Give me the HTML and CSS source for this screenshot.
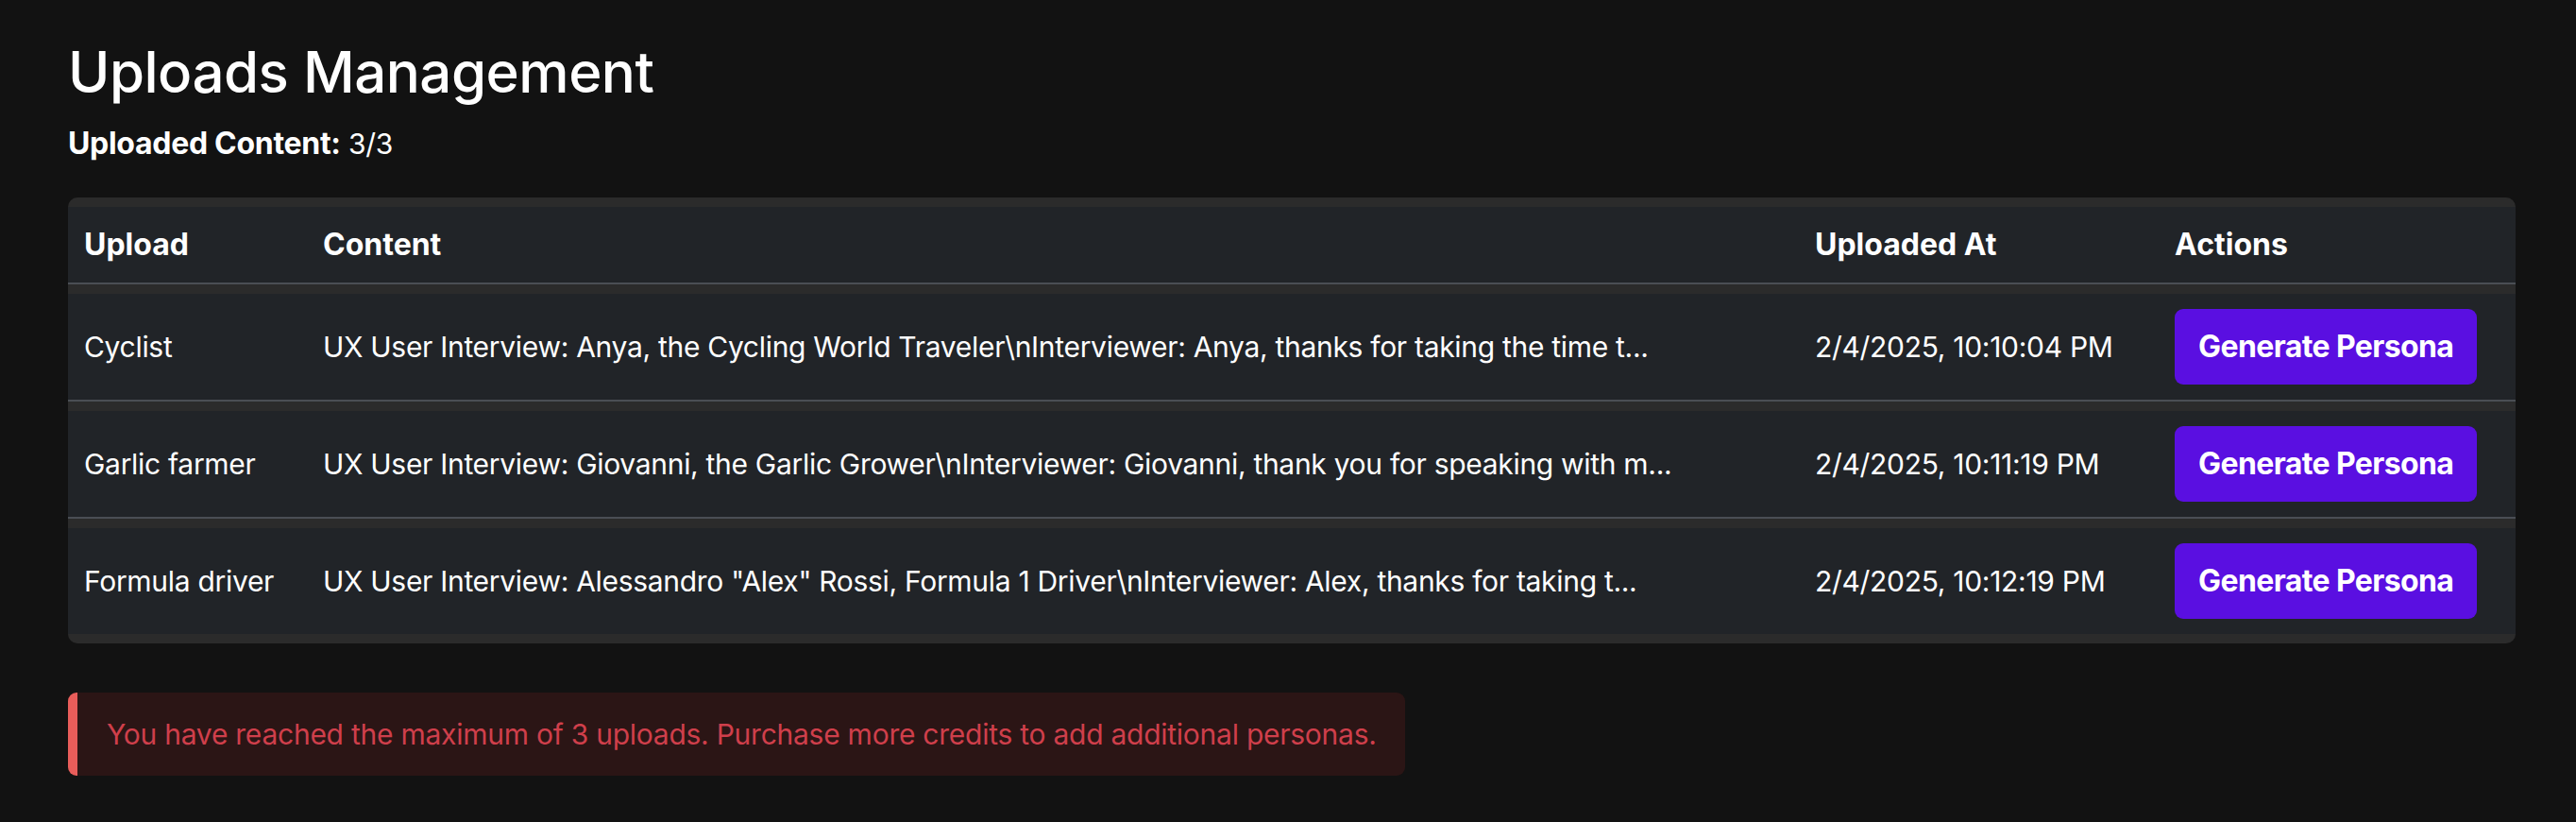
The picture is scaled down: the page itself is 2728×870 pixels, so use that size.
FILE: index.html
```html
<!DOCTYPE html>
<html lang="en">
<head>
<meta charset="utf-8">
<title>Uploads Management</title>
<link rel="stylesheet" href="styles.css">
</head>
<body>
<main class="page">
  <h1 class="title">Uploads Management</h1>
  <p class="usage"><strong>Uploaded Content:</strong> 3/3</p>
  <table class="uploads">
    <colgroup>
      <col class="col-upload">
      <col class="col-content">
      <col class="col-date">
      <col class="col-actions">
    </colgroup>
    <thead>
      <tr>
        <th>Upload</th>
        <th>Content</th>
        <th>Uploaded At</th>
        <th>Actions</th>
      </tr>
    </thead>
    <tbody>
      <tr>
        <td>Cyclist</td>
        <td>UX User Interview: Anya, the Cycling World Traveler\nInterviewer: Anya, thanks for taking the time t...</td>
        <td>2/4/2025, 10:10:04 PM</td>
        <td><button class="btn-generate">Generate Persona</button></td>
      </tr>
      <tr>
        <td>Garlic farmer</td>
        <td>UX User Interview: Giovanni, the Garlic Grower\nInterviewer: Giovanni, thank you for speaking with m...</td>
        <td>2/4/2025, 10:11:19 PM</td>
        <td><button class="btn-generate">Generate Persona</button></td>
      </tr>
      <tr>
        <td>Formula driver</td>
        <td>UX User Interview: Alessandro "Alex" Rossi, Formula 1 Driver\nInterviewer: Alex, thanks for taking t...</td>
        <td>2/4/2025, 10:12:19 PM</td>
        <td><button class="btn-generate">Generate Persona</button></td>
      </tr>
    </tbody>
  </table>
  <div class="alert">You have reached the maximum of 3 uploads. Purchase more credits to add additional personas.</div>
</main>
</body>
</html>
```
FILE: styles.css
```css
html, body {
  margin: 0;
  padding: 0;
  background: #121212;
}

body {
  font-family: "Inter", "Liberation Sans", sans-serif;
  color: #ffffff;
}

.page {
  padding: 40px 64px 40px 72px;
}

.title {
  margin: 0;
  font-size: 60px;
  line-height: 72px;
  font-weight: 500;
  letter-spacing: -0.5px;
}

.usage {
  margin: 16px 0 0;
  font-size: 30px;
  line-height: 48px;
  letter-spacing: -0.2px;
}

.usage strong {
  font-size: 32px;
  font-weight: 700;
  letter-spacing: -0.3px;
}

.uploads {
  margin-top: 33px;
  width: 2592px;
  table-layout: fixed;
  border-collapse: separate;
  border-spacing: 0 10px;
  background: #2b2b2b;
  border-radius: 10px;
  font-size: 30px;
  line-height: 48px;
  letter-spacing: -0.3px;
}

.col-upload { width: 253px; }
.col-content { width: 1580px; }
.col-date { width: 381px; }
.col-actions { width: 378px; }

.uploads th,
.uploads td {
  background: #212428;
  padding: 16px 16px 16px 17px;
  text-align: left;
  vertical-align: middle;
  white-space: nowrap;
  overflow: hidden;
}

.uploads th {
  font-size: 32px;
  font-weight: 700;
  letter-spacing: 0;
  border-bottom: 2px solid #4a4e54;
}

.uploads tbody tr:not(:last-child) td {
  border-bottom: 2px solid #4a4e54;
}

.btn-generate {
  font-family: inherit;
  font-size: 32px;
  line-height: 48px;
  font-weight: 700;
  letter-spacing: -0.6px;
  color: #ffffff;
  background: #5a0fe1;
  border: 0;
  border-radius: 9px;
  padding: 16px 25px;
  cursor: pointer;
}

.alert {
  margin-top: 52px;
  width: fit-content;
  box-sizing: border-box;
  padding: 20px 30px 20px 31px;
  background: #2b1515;
  border-left: 10px solid #e85d5a;
  border-radius: 9px;
  color: #cf3f4b;
  font-size: 30px;
  line-height: 48px;
  letter-spacing: -0.25px;
}
```
